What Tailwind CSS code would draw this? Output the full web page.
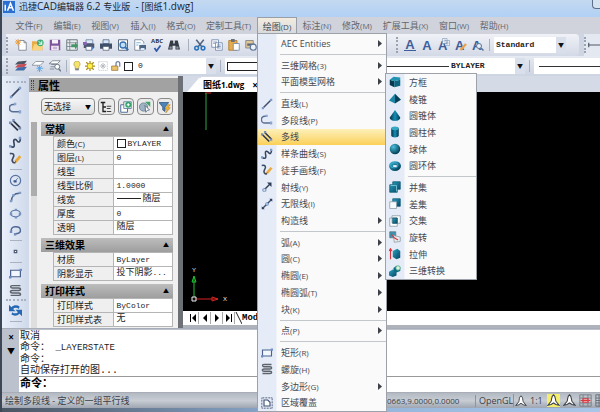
<!DOCTYPE html>
<html lang="zh-CN">
<head>
  <meta charset="utf-8">
  <title>迅捷CAD编辑器 6.2 专业版</title>
  <meta name="viewport" content="width=device-width, initial-scale=1">
  <script src="https://cdn.jsdelivr.net/npm/@tailwindcss/browser@4"></script>
</head>
<body class="bg-[#2d3238] font-['Open_Sans','Noto_Sans_CJK_SC',sans-serif] text-[9px] leading-none text-[#444952]">

  <!-- icon sprite -->
  <svg class="absolute size-0">
    <defs>
      <linearGradient id="teal" x1="0" y1="0" x2="1" y2="1"><stop offset="0" stop-color="#2ba3c4"/><stop offset="1" stop-color="#04445f"/></linearGradient>
      <linearGradient id="barrel" x1="0" y1="0" x2="1" y2="0"><stop offset="0" stop-color="#032f45"/><stop offset=".5" stop-color="#1590b5"/><stop offset="1" stop-color="#03354c"/></linearGradient>
      <radialGradient id="ballfill" cx=".35" cy=".3" r=".7"><stop offset="0" stop-color="#4cc0dc"/><stop offset="1" stop-color="#034058"/></radialGradient>
    </defs>
    <symbol id="line" viewBox="0 0 16 16"><path d="M3 13 13 3" stroke="#3b4a68" stroke-width="2"/><path d="M1 12h3v3H1zM12 1h3v3h-3z" fill="#7f9cc8"/></symbol>
    <symbol id="pline" viewBox="0 0 16 16" fill="none"><path d="M7 3H5a4 4 0 0 0 0 9h8" stroke="#5a6d92" stroke-width="2"/><path d="M6 1h3v3H6zM12 10h3v4h-3z" fill="#8ba6d0"/></symbol>
    <symbol id="mline" viewBox="0 0 16 16"><path d="m2 5 9 9M5 2l9 9" stroke="#30384a" stroke-width="2.200"/><path d="M0 3h3v3H0zM4 0h3v3H4zM12 10h3v3h-3z" fill="#7890b8"/></symbol>
    <symbol id="spline" viewBox="0 0 16 16" fill="none"><path d="M2 13c5 2 5-1 4-5s2-5 4-2 4 1 4-3" stroke="#34435f" stroke-width="2"/><path d="M0 11h3v3H0zM12 1h3v3h-3z" fill="#7f9cc8"/></symbol>
    <symbol id="free" viewBox="0 0 16 16" fill="none"><path d="M1 2c5-1 6 2 4 5s-1 7 3 6" stroke="#3d4a63" stroke-width="2"/><path d="m8 12 6-7" stroke="#eba93c" stroke-width="3.500"/><path d="m6 14 2-3 1 1z" fill="#704b1d"/></symbol>
    <symbol id="ray" viewBox="0 0 16 16"><path d="m4 12 8-8" stroke="#2f3d58" stroke-width="2"/><path d="M8 2h6v6z" fill="#2f3d58"/><path d="M2.500 10.500h4v3h-4z" fill="#fff" stroke="#4d72ae"/></symbol>
    <symbol id="xline" viewBox="0 0 16 16"><path d="M2 14 14 2" stroke="#3c5073" stroke-width="2"/><path d="M6.500 6.500h3v3h-3z" fill="#fff" stroke="#4d72ae"/><path d="M1 11v4h4zM11 1h4v4z" fill="#2f3d58"/></symbol>
    <symbol id="circle" viewBox="0 0 16 16" fill="none" stroke="#5673a3"><circle cx="8" cy="8" r="6.300" stroke-width="1.500"/><path d="m7 9 4-4"/><path d="M6 8h3v2H6z" fill="#2d466f"/></symbol>
    <symbol id="arc" viewBox="0 0 16 16" fill="none"><path d="M3 14c0-6 3-10 10-10" stroke="#4a6288" stroke-width="1.700"/><path d="M1 12h3v3H1zM4 5h3v3H4zM12 2h3v3h-3z" fill="#7f9cc8"/></symbol>
    <symbol id="ellipse" viewBox="0 0 16 16"><ellipse cx="8" cy="8" rx="6" ry="4" fill="none" stroke="#5673a3" stroke-width="1.500"/><path d="M1 7h3v3H1zM7 2h3v3H7zM12 7h3v3h-3zM7 11h3v3H7z" fill="#7893c0"/></symbol>
    <symbol id="earc" viewBox="0 0 16 16" fill="none"><path d="M3 9c-2-7 10-7 11-2 1 4-3 5-6 5" stroke="#4d6694" stroke-width="1.800"/><path d="M1 8h3v3H1zM6 11h3v3H6z" fill="#6f8cbd"/></symbol>
    <symbol id="point" viewBox="0 0 16 16"><path d="M6.500 6.500h3v3h-3z" fill="#fff" stroke="#4d5a72" stroke-width="1.500"/></symbol>
    <symbol id="rect" viewBox="0 0 16 16"><path d="M2 4h12v8H2z" fill="#f1f6ff" stroke="#48628e" stroke-width="1.500"/><path d="M0 11h3v3H0zM13 2h3v3h-3z" fill="#6d8dc4"/></symbol>
    <symbol id="helix" viewBox="0 0 16 16" fill="none" stroke="#5e646d" stroke-width="1.800"><path d="M14 2H4c-3 0-2 3 0 3h8c3 0 3 3 0 3H4c-3 0-3 3 0 3h8c3 0 3 3 0 3H2"/></symbol>
    <symbol id="wipe" viewBox="0 0 16 16"><path d="M1 1h14v14H1z" fill="none" stroke="#66738c" stroke-width="2" stroke-dasharray="1 1"/><path d="M4 4h5l3 3v5H4z" fill="#fff" stroke="#3d4f70" stroke-width="1.500"/></symbol>
    <symbol id="refresh" viewBox="0 0 16 16" fill="#2768b4"><path d="M0 1v8h8L5 6c2-2 5-2 7 0l1-3C10 1 6 1 3 4z"/><path d="M16 15V7H8l3 3c-2 2-5 2-7 0l-1 3c3 2 7 2 10-1z"/></symbol>

    <symbol id="box" viewBox="0 0 16 16"><path d="m1 5 6 2v8l-6-3z" fill="#06384f"/><path d="m7 7 8-2v8l-8 2z" fill="#0b6380"/><path d="m1 5 5-4 9 1v3L7 7z" fill="#2093b3"/></symbol>
    <symbol id="pyramid" viewBox="0 0 16 16"><path d="M8 1 0 10l8 4z" fill="#1c86a6"/><path d="m8 1 8 8-8 5z" fill="#064059"/></symbol>
    <symbol id="cone" viewBox="0 0 16 16"><path d="M8 0 1 10c0 6 14 6 14 0z" fill="url(#barrel)"/></symbol>
    <symbol id="cylinder" viewBox="0 0 16 16"><path d="M3 3v10c1 3 9 3 10 0V3z" fill="url(#barrel)"/><ellipse cx="8" cy="3" rx="5" ry="2.500" fill="#35a8c4"/></symbol>
    <symbol id="sphere" viewBox="0 0 16 16"><circle cx="8" cy="8" r="7" fill="url(#ballfill)"/></symbol>
    <symbol id="torus" viewBox="0 0 16 16"><ellipse cx="8" cy="8" rx="5.500" ry="4" fill="none" stroke="url(#teal)" stroke-width="5"/><ellipse cx="7" cy="7" rx="5" ry="3.500" fill="none" stroke="#49b5d0"/></symbol>
    <symbol id="union" viewBox="0 0 16 16"><path d="M5 1h10v10h-4v4H1V5h4z" fill="url(#teal)" stroke="#0b556f"/><path d="M2 6h8v8" fill="none" stroke="#8fd2e4"/></symbol>
    <symbol id="subtract" viewBox="0 0 16 16"><path d="M5 1h10v10H5z" fill="url(#teal)" stroke="#0b556f"/><path d="M1 5h9v9H1z" fill="#f7fafc" stroke="#8b9aa8"/></symbol>
    <symbol id="intersect" viewBox="0 0 16 16"><path d="M4 1h11v10H4zM1 4h10v11H1z" fill="#fff" stroke="#83929f"/><path d="M5 4h6v7H5z" fill="url(#teal)" stroke="#0b556f"/></symbol>
    <symbol id="rotate" viewBox="0 0 16 16"><path d="M1 1h8v8H1z" fill="#3b93ad" stroke="#557582"/><path d="m6 6 9 2v6l-8 1z" fill="#e8edf0" stroke="#8b98a2"/><path d="m3 4 4 5 5 3" fill="none" stroke="#d63b45" stroke-width="1.500"/></symbol>
    <symbol id="extrude" viewBox="0 0 16 16"><path d="m5 4 6-3 4 3v9l-5 2-5-3z" fill="url(#teal)"/><path d="M2 15V2M0 4l2-3 2 3" fill="none" stroke="#d9303a" stroke-width="1.500"/></symbol>
    <symbol id="convert" viewBox="0 0 16 16"><path d="m0 9 5-3 5 3v5l-5 2-5-2z" fill="url(#teal)"/><path d="m6 4 4-3 5 2v5l-5 2-4-2z" fill="#0d6a85"/><circle cx="12" cy="4" r="3" fill="#d9f2e2" stroke="#42a575"/></symbol>

    <symbol id="new" viewBox="0 0 16 16"><path d="M5 2h7l3 3v10H5z" fill="#fff" stroke="#6b7480"/><path d="M12 2v3h3" fill="none" stroke="#6b7480"/><path d="M4 0v9M0 4h8M1 1l6 6M7 1 1 7" stroke="#f09a36" stroke-width="1.300"/></symbol>
    <symbol id="open" viewBox="0 0 16 16"><path d="M0 3h6l1 2h7v10H0z" fill="#e9ad45"/><path d="m0 15 3-8h12l-2 8z" fill="#f8d480"/><circle cx="11" cy="5" r="4.500" fill="#3fae78"/><path d="m9 3 4 4m0-4v4H9" fill="none" stroke="#fff" stroke-width="1.300"/></symbol>
    <symbol id="save" viewBox="0 0 16 16"><path d="M1 1h14v14H1z" fill="#81539b"/><path d="M4 1h8v5H4zM3 9h10v6H3z" fill="#f6f1f9"/><path d="M5 11h6M5 13h6" stroke="#a386b5"/></symbol>
    <symbol id="export" viewBox="0 0 16 16"><path d="M1 1h14v14H1z" fill="#e8edef" stroke="#4e5962"/><path d="M1 5h14M5 1v14M1 10h14" stroke="#6d7a84"/><path d="M7 7h5V4l4 5-4 5v-3H7z" fill="#439668"/></symbol>
    <symbol id="plot" viewBox="0 0 16 16"><path d="M4 1h9v5H4z" fill="#dce9f8" stroke="#667995"/><path d="M1 6h14v6H1z" fill="#4b5870"/><path d="M4 10h8v5H4z" fill="#fff" stroke="#51627f"/><path d="M0 4h5v4H0z" fill="#8a62b3"/><path d="m11 10 4 2-4 3z" fill="#4d86ce"/></symbol>
    <symbol id="print" viewBox="0 0 16 16"><path d="M4 1h8v5H4z" fill="#d7e6f8" stroke="#52647e"/><path d="M0 6h16v7H0z" fill="#3f506a"/><path d="M4 10h8v5H4z" fill="#fff" stroke="#52647e"/></symbol>
    <symbol id="preview" viewBox="0 0 16 16"><path d="M2 1h12v14H2z" fill="#fff" stroke="#55677e" stroke-width="1.300"/><circle cx="8" cy="8" r="4" fill="#bfe0f7" stroke="#3870b0" stroke-width="1.700"/><path d="m11 11 4 4" stroke="#3870b0" stroke-width="2.500"/></symbol>
    <symbol id="zoomglass" viewBox="0 0 16 16"><circle cx="6" cy="6" r="5" fill="#e6f0fa" stroke="#59708f" stroke-width="2"/><path d="m10 10 5 5" stroke="#59708f" stroke-width="3"/></symbol>
    <symbol id="pagesetup" viewBox="0 0 16 16"><path d="M1 1h9l3 3v11H1z" fill="#fff" stroke="#64758a"/><path d="M3 5h6M3 8h3" stroke="#5f9ac9"/><path d="M7 8h9v6H7z" fill="#4f6683"/><path d="M9 6h5v2H9zM9 12h5v3H9z" fill="#d7e9fa"/></symbol>
    <symbol id="check" viewBox="0 0 16 16"><path d="m3 8 4 6 8-11" fill="none" stroke="#3159a8" stroke-width="3.500"/></symbol>
    <symbol id="find" viewBox="0 0 16 16" fill="#353b45"><path d="M3 2h4v4h2V2h4l3 12h-6V9H6v5H0z"/><path d="M2 10h3v3H2zM11 10h3v3h-3z" fill="#8b939e"/></symbol>
    <symbol id="cut" viewBox="0 0 16 16" fill="none"><path d="m3 1 8 10M13 1 5 11" stroke="#50647e" stroke-width="2"/><circle cx="3.500" cy="12" r="2.500" stroke="#2873bd" stroke-width="2"/><circle cx="12" cy="12" r="2.500" stroke="#2873bd" stroke-width="2"/></symbol>
    <symbol id="copy" viewBox="0 0 16 16" fill="#fff" stroke="#637da6"><path d="M1 1h9v10H1zM6 5h9v10H6z"/><path d="M3 4h5M3 6h2M8 8h5M8 10h5M8 12h5"/></symbol>
    <symbol id="paste" viewBox="0 0 16 16"><path d="M1 2h11v13H1z" fill="#e8ac48" stroke="#a5742a"/><path d="M4 0h5v4H4z" fill="#69717e"/><path d="M7 6h8v9H7z" fill="#fff" stroke="#6480ad"/></symbol>
    <symbol id="brush" viewBox="0 0 16 16"><path d="M1 2h10v10H1z" fill="#dfc79c" stroke="#777"/><path d="M3 6h10v3H3z" fill="#5c6776"/><circle cx="11" cy="11" r="4" fill="#eef3fa" stroke="#5b759d" stroke-width="1.500"/></symbol>
    <symbol id="layers" viewBox="0 0 16 16"><path d="m4 2 12-1-4 5H0z" fill="#4b5462"/><path d="m4 6 12-1-4 5H0z" fill="#c94d57"/><path d="m4 10 12-1-4 5H0z" fill="#3f6ca8"/></symbol>
    <symbol id="layernew" viewBox="0 0 16 16"><path d="M5 2h11l-5 5H0z" fill="#fff" stroke="#77808d"/><path d="M10 7v9M6 11h9M7 8l6 7M13 8l-6 7" stroke="#5ba7e5" stroke-width="1.300"/></symbol>
    <symbol id="layerfind" viewBox="0 0 16 16" fill="#fff" stroke="#6c7684"><path d="M5 1h10l-4 4H0zM3 6h8M2 9h6M1 12h6"/><circle cx="11" cy="9" r="3.300" stroke-width="1.300"/><path d="m13 12 3 3" stroke-width="2"/></symbol>
    <symbol id="bulb" viewBox="0 0 16 16"><path d="M8 0a5 5 0 0 1 3 9v3H5V9a5 5 0 0 1 3-9z" fill="#f7e36b" stroke="#a39444"/><path d="M5 12h6v3H5z" fill="#7d8389"/></symbol>
    <symbol id="sun" viewBox="0 0 16 16"><path d="M8 0v16M0 8h16M2 2l12 12M14 2 2 14" stroke="#b08f18" stroke-width="2"/><circle cx="8" cy="8" r="4.500" fill="#fff04a" stroke="#a18414"/></symbol>
    <symbol id="freeze" viewBox="0 0 16 16" fill="none" stroke="#b4b9bf"><path d="M1 1h14v14H1z" stroke-dasharray="2 1"/><path d="M8 3v10M3 8h10M5 5l6 6m0-6-6 6" stroke-width="1.500"/></symbol>
    <symbol id="lock" viewBox="0 0 16 16"><path d="M8 8V4c0-4 6-4 6 0v5" fill="none" stroke="#7080a8" stroke-width="2"/><path d="M1 8h10v7H1z" fill="#ebc56b" stroke="#866529"/></symbol>
    <symbol id="tree" viewBox="0 0 16 16"><path d="M1 2h6M4 2v13M4 8h4M4 14h4" fill="none" stroke="#222" stroke-width="1.800"/><path d="M9 7h6M9 10h5M9 14h6" stroke="#444" stroke-width="1.500"/></symbol>
    <symbol id="addset" viewBox="0 0 16 16"><path d="M1 5h9v10H1z" fill="#fff" stroke="#4d6c96" stroke-width="1.300"/><path d="M5 1h10v9H5z" fill="#e9f7ee" stroke="#4d6c96"/><circle cx="11" cy="5" r="4" fill="#34a36a"/><path d="M11 3v4M9 5h4" stroke="#fff" stroke-width="1.500"/></symbol>
    <symbol id="pick" viewBox="0 0 16 16"><circle cx="6" cy="8" r="5.500" fill="#9eb2c4" stroke="#667c92"/><path d="M8 1h7v7z" fill="#3fa269"/><path d="m8 6 6 6-3 .5L9 15z" fill="#fff" stroke="#455a70"/></symbol>
    <symbol id="filter" viewBox="0 0 16 16"><path d="M0 2h13L8 8v6l-3-2V8z" fill="#4d82b6" stroke="#2f5680"/><path d="m12 5-4 6h3l-2 5 6-7h-3l3-4z" fill="#f5b632" stroke="#b27712" stroke-width=".7"/></symbol>
    <symbol id="scale" viewBox="0 0 16 16" fill="#fff" stroke="#3d4148" stroke-width="1.300"><path d="M8 1c3 2 2 6 3 8l4 5-4-1-3-2-3 2-4 1 4-5c1-2 0-6 3-8z"/></symbol>
    <symbol id="snap" viewBox="0 0 16 16"><path d="M1 1h14v14H1zM1 5h14M1 11h14M5 1v14M11 1v14" fill="none" stroke="#70767f"/><path d="M2 8h12M5 6h6v4H5z" fill="#fff" stroke="#e0383e" stroke-width="1.500"/></symbol>
    <symbol id="gridmode" viewBox="0 0 16 16"><path d="M1 1h14v14H1zM1 5h14M1 8h14M1 11h14M5 1v14M8 1v14M11 1v14" fill="none" stroke="#5d636d"/></symbol>
  </svg>

  <div class="flex h-screen flex-col overflow-hidden border-l-2 border-[#3c4654] bg-[#c9d0dc]">

    <!-- title bar -->
    <header class="flex h-[17px] shrink-0 items-start justify-between bg-linear-to-b from-[#c4d9f0] to-[#b0d0f5] pl-px text-[#1b2430]">
      <div class="flex items-center gap-1">
        <svg class="size-3" viewBox="0 0 16 16"><path d="M0 0h16v16H0z" fill="#2b6fd0"/><path d="M3 5v8M6 13l4-10 4 10M8 9h4" fill="none" stroke="#fff" stroke-width="2"/></svg>
        <h1 class="whitespace-pre text-[9px] leading-3">迅捷<span class="text-[10px]">CAD</span>编辑器<span class="text-[10px]"> 6.2 </span>专业版<span class="text-[10px]">  - [</span>图纸<span class="text-[10px]">1.dwg]</span></h1>
      </div>
      <button class="h-[9px] w-2 rounded-bl border-b border-l border-[#5c6f88] bg-[#d5e2f0]" aria-label="最小化"></button>
    </header>

    <!-- menu bar -->
    <nav class="flex h-[17px] shrink-0 bg-[#d0d3dc] pl-2 text-[#62666f]" id="menubar"></nav>

    <!-- standard toolbar -->
    <div class="flex h-[22px] shrink-0 bg-[#cfd5e2] pl-1">
      <div class="flex min-w-0 flex-1 items-center rounded-r bg-linear-to-b from-[#f0f2f7] to-[#d3d9e6]">
        <div class="flex w-[386px] shrink-0 items-center gap-[5px]">
          <i class="mr-px h-4 w-[3px] border-l-2 border-dotted border-[#9ba3b3]"></i>
          <svg class="size-3"><use href="#new"/></svg>
          <svg class="size-3"><use href="#open"/></svg>
          <svg class="size-3"><use href="#save"/></svg>
          <svg class="size-3"><use href="#export"/></svg>
          <svg class="size-3"><use href="#plot"/></svg>
          <svg class="size-3"><use href="#print"/></svg>
          <svg class="size-3"><use href="#preview"/></svg>
          <svg class="size-3"><use href="#pagesetup"/></svg>
          <span class="flex w-3 flex-col items-center text-[6px] font-bold leading-[5px] text-[#30343c]">ABC<svg class="size-2 shrink-0"><use href="#check"/></svg></span>
          <svg class="size-3"><use href="#find"/></svg>
          <i class="ml-[3px] h-3 w-px bg-[#a9b0be]"></i>
          <svg class="size-3"><use href="#cut"/></svg>
          <svg class="size-3"><use href="#copy"/></svg>
          <svg class="size-3"><use href="#paste"/></svg>
          <svg class="size-3"><use href="#brush"/></svg>
        </div>
        <div class="flex items-center gap-[5px] font-['Liberation_Sans',sans-serif] text-[13px] font-bold text-[#3c5e9b]">
          <i class="ml-1 h-4 w-[3px] border-l-2 border-dotted border-[#9ba3b3]"></i>
          <span class="w-3 border-b border-[#3c5e9b] text-center leading-[11px]">A</span>
          <span class="w-3 text-center">A</span>
          <span class="relative w-3">A<svg class="absolute -top-px left-1 size-2"><use href="#copy"/></svg></span>
          <span class="relative w-3">A<svg class="absolute top-1 left-1 size-2" viewBox="0 0 16 16"><path d="m3 14 11-12" stroke="#eba04a" stroke-width="5"/></svg></span>
          <span class="relative w-3">A<svg class="absolute top-1 left-1 size-2"><use href="#zoomglass"/></svg></span>
          <i class="h-3 w-px bg-[#a9b0be]"></i>
        </div>
        <label class="relative ml-1 flex h-4 w-[72px] items-center bg-white">
          <select aria-label="文字样式" class="w-full appearance-none pl-[2px] font-['Liberation_Mono',monospace] text-[8px] font-bold text-[#222]"><option>Standard</option></select>
          <span class="pointer-events-none absolute right-0 flex h-4 w-[10px] items-center justify-center bg-[#d9e0ec] text-[6px] text-[#111]">▼</span>
        </label>
      </div>
      <div class="ml-[5px] flex w-4 shrink-0 items-center overflow-hidden bg-[#e4e8f0]">
        <i class="h-4 w-[6px] border-l-2 border-dotted border-[#9ba3b3]"></i>
        <svg class="size-3 shrink-0" viewBox="0 0 16 16"><path d="M0 8h16M1 5v6" stroke="#4e5968" stroke-width="1.500"/></svg>
      </div>
    </div>

    <!-- layer toolbar -->
    <div class="flex h-5 shrink-0 items-center bg-linear-to-b from-[#e6eaf2] to-[#cdd4e2] pl-1">
      <div class="flex w-[64px] shrink-0 items-center gap-[5px]">
        <i class="mr-px h-4 w-[3px] border-l-2 border-dotted border-[#9ba3b3]"></i>
        <svg class="size-3 shrink-0"><use href="#layers"/></svg>
        <svg class="size-3 shrink-0"><use href="#layernew"/></svg>
        <svg class="size-3 shrink-0"><use href="#layerfind"/></svg>
        <i class="h-3 w-px bg-[#a9b0be]"></i>
      </div>
      <label class="relative flex h-4 w-[146px] shrink-0 items-center gap-[3px] bg-white pl-[2px]">
        <svg class="size-[10px] shrink-0"><use href="#bulb"/></svg>
        <svg class="size-[10px] shrink-0"><use href="#sun"/></svg>
        <svg class="size-[10px] shrink-0"><use href="#freeze"/></svg>
        <svg class="size-[10px] shrink-0"><use href="#lock"/></svg>
        <i class="size-[9px] shrink-0 border border-[#222] bg-white"></i>
        <select aria-label="图层" class="min-w-0 flex-1 appearance-none pl-[2px] font-['Liberation_Mono',monospace] text-[8px] text-[#222]"><option>0</option></select>
        <span class="pointer-events-none absolute right-0 flex h-4 w-[10px] items-center justify-center bg-[#d9e0ec] text-[6px] text-[#111]">▼</span>
      </label>
      <i class="mx-1 h-3 w-px shrink-0 bg-[#a9b0be]"></i>
      <label class="flex h-4 w-[152px] shrink-0 items-center bg-white pl-[2px]">
        <i class="h-[9px] w-[60px] border border-[#222]"></i>
        <select aria-label="颜色" class="w-20 appearance-none"></select>
      </label>
      <label class="relative ml-[4px] flex h-4 w-[144px] shrink-0 items-center bg-white">
        <i class="h-px w-[68px] bg-[#333]"></i>
        <select aria-label="线型" class="w-[60px] appearance-none pl-[2px] font-['Liberation_Mono',monospace] text-[8px] font-bold text-[#222]"><option>BYLAYER</option></select>
        <span class="pointer-events-none absolute right-0 flex h-4 w-[10px] items-center justify-center bg-[#d9e0ec] text-[6px] text-[#111]">▼</span>
      </label>
      <i class="mx-1 h-3 w-px shrink-0 bg-[#a9b0be]"></i>
      <div class="flex h-4 flex-1 items-center bg-white pl-[5px]"><i class="h-px flex-1 bg-[#333]"></i></div>
    </div>

    <!-- work area -->
    <main class="flex min-h-0 flex-1">
      <aside class="flex w-[27px] shrink-0 flex-col items-center bg-linear-to-r from-[#eaf0fa] to-[#cfd9ea] pt-1 pb-1" id="drawbar"></aside>

      <section class="flex w-[154px] shrink-0 flex-col border-r-[5px] border-[#6d7075] bg-[#f0f0f0] text-[#222]">
        <h2 class="mt-[2px] flex h-[14px] shrink-0 items-center gap-1 bg-[#a2a2a2] pl-[2px] text-[11px] font-bold text-black"><i class="h-[10px] w-[3px] border-x border-dotted border-[#444]"></i>属性</h2>
        <div class="flex shrink-0 items-center gap-[3px] pt-[6px] pr-[5px] pb-[7px] pl-3">
          <label class="relative flex h-[17px] w-[54px] items-center rounded-sm border border-[#8a8a8a] bg-linear-to-b from-[#f6f6f6] to-[#dcdcdc]">
            <select aria-label="选择" class="w-full appearance-none pl-[2px] text-[9px]"><option>无选择</option></select>
            <span class="pointer-events-none absolute right-[3px] text-[6px] text-black">▼</span>
          </label>
          <button class="flex h-[17px] flex-1 items-center justify-center rounded-sm border border-[#8a8a8a] bg-[#eaeaea]" aria-label="树"><svg class="size-3"><use href="#tree"/></svg></button>
          <button class="flex h-[17px] flex-1 items-center justify-center rounded-sm border border-[#8a8a8a] bg-[#eaeaea]" aria-label="添加"><svg class="size-3"><use href="#addset"/></svg></button>
          <button class="flex h-[17px] flex-1 items-center justify-center rounded-sm border border-[#8a8a8a] bg-[#eaeaea]" aria-label="拾取"><svg class="size-3"><use href="#pick"/></svg></button>
          <button class="flex h-[17px] flex-1 items-center justify-center rounded-sm border border-[#8a8a8a] bg-[#eaeaea]" aria-label="筛选"><svg class="size-3"><use href="#filter"/></svg></button>
        </div>
        <div class="flex min-h-0 flex-1 gap-1 overflow-hidden pr-[5px] pl-[2px]">
          <div class="w-[6px] shrink-0 bg-[#dedede]"><div class="h-[74px] bg-[#adadad]"></div></div>
          <div class="flex flex-1 flex-col gap-[3px]" id="props"></div>
        </div>
      </section>

      <section class="flex min-w-0 flex-1 flex-col bg-[#d5dbe6]">
        <div class="flex h-4 shrink-0 items-end pl-1">
          <svg class="h-[15px] w-[14px]" viewBox="0 0 14 15"><path d="M0 15 12 1h2v14z" fill="#fff"/></svg>
          <div class="flex h-[15px] items-center gap-2 bg-white pr-2 pl-[2px] text-[9px] font-bold text-black"><span>图纸<span class="text-[8px]">1.dwg</span></span><button aria-label="关闭" class="text-[10px] font-bold">×</button></div>
        </div>
        <div class="relative flex-1 bg-black">
          <svg class="absolute top-0 left-[22px] h-[38px] w-2" viewBox="0 0 8 38"><path d="M0 1h6" stroke="#c22"/><path d="M1 1v37" stroke="#35a53e" stroke-width="1"/></svg>
          <svg class="absolute bottom-1 left-[6px] h-[42px] w-10 font-['Liberation_Sans',sans-serif]" viewBox="0 0 40 42"><path d="M5 33V12" stroke="#1fc32f"/><path d="m3 17 2-6 2 6z" fill="none" stroke="#1fc32f"/><path d="M7 34h22" stroke="#d52222"/><path d="m23 32 6 2-6 2z" fill="none" stroke="#d52222"/><path d="M3 32h4v4H3z" fill="#111" stroke="#eee"/><text x="3" y="7" font-size="6" fill="#eee">Y</text><text x="34" y="36" font-size="6" fill="#eee">X</text></svg>
        </div>
        <div class="flex h-[14px] shrink-0 items-center bg-white pl-1 text-black">
          <button class="flex h-3 w-3 items-center justify-center border-r border-[#aaa]" aria-label="第一页"><svg class="size-2" viewBox="0 0 8 8"><path d="M1 0h1v8H1zM7 0v8L3 4z"/></svg></button>
          <button class="flex h-3 w-3 items-center justify-center border-r border-[#aaa]" aria-label="上一页"><svg class="size-2" viewBox="0 0 8 8"><path d="M6 0v8L2 4z"/></svg></button>
          <button class="flex h-3 w-3 items-center justify-center border-r border-[#aaa]" aria-label="下一页"><svg class="size-2" viewBox="0 0 8 8"><path d="M2 0v8l4-4z"/></svg></button>
          <button class="flex h-3 w-3 items-center justify-center border-r border-[#aaa]" aria-label="最后一页"><svg class="size-2" viewBox="0 0 8 8"><path d="M6 0h1v8H6zM1 0v8l4-4z"/></svg></button>
          <svg class="h-3 w-[7px]" viewBox="0 0 7 12"><path d="m1 0 6 12" stroke="#222"/></svg>
          <a href="#model" class="font-['Liberation_Mono',monospace] text-[9px] font-bold">Mod</a>
        </div>
        <div class="h-[3px] shrink-0 bg-[#aeb3bb]"></div>
      </section>
    </main>

    <!-- command line -->
    <section class="flex shrink-0 border-y border-[#a8adb7] bg-[#bcc2cd] pt-px pl-px text-[#222]">
      <div class="flex w-4 shrink-0 flex-col items-center gap-[5px] pt-[2px] text-black">
        <button aria-label="关闭" class="text-[10px] font-bold">×</button>
        <span class="text-[8px]">▼</span>
      </div>
      <div class="flex-1 bg-white font-['Liberation_Mono','Noto_Sans_CJK_SC',monospace]">
        <div class="border-b border-[#999] pt-px pl-px text-[10px] leading-[11px]">
          <p>取消</p>
          <p class="whitespace-pre">命令：<span class="text-[9px]"> _LAYERSTATE</span></p>
          <p>命令：</p>
          <p>自动保存打开的图...</p>
        </div>
        <label class="flex h-[15px] items-center pl-px text-[11px] font-bold text-black">命令：<input class="h-3 flex-1 outline-none" type="text"></label>
      </div>
    </section>

    <!-- status bar -->
    <footer class="flex h-[15px] shrink-0 items-center bg-linear-to-b from-[#b3b9c2] via-[#c8cdd4] to-[#9fa6b1] pl-[3px] text-[#3a3f47]">
      <span class="w-[382px] shrink-0">绘制多段线 - 定义的一组平行线</span>
      <span class="w-[88px] shrink-0 text-[8px]">0663,9.0000,0.0000</span>
      <span class="flex h-3 w-[38px] shrink-0 items-center border-l border-[#8d949f] pl-[3px] text-[9px]">OpenGL</span>
      <span class="flex flex-1 items-center gap-[3px] border-l border-[#8d949f] pl-px">
        <svg class="size-3 shrink-0"><use href="#scale"/></svg>
        <span class="w-[14px] shrink-0">1:1</span>
        <svg class="size-[13px] shrink-0 bg-[#f3ee6c]"><use href="#scale"/></svg>
        <svg class="size-[13px] shrink-0"><use href="#scale"/></svg>
        <svg class="size-[13px] shrink-0"><use href="#snap"/></svg>
        <svg class="size-[13px] shrink-0"><use href="#gridmode"/></svg>
      </span>
    </footer>
    <div class="h-[4px] shrink-0 bg-linear-to-r from-[#4a5563] via-[#8fb0d6] to-[#a9c6e8]"></div>
  </div>

  <script>
    // '-' is a separator, '>' marks an entry that opens a submenu
    var drawMenu = [
      ['', 'AEC Entities', '>'], '-',
      ['', '三维网格(3)', '>'], ['', '平面模型网格', '>'], '-',
      ['line', '直线(L)'], ['pline', '多段线(P)'], ['mline', '多线', 'on'], ['spline', '样条曲线(S)'],
      ['free', '徒手画线(F)'], ['ray', '射线(Y)'], ['xline', '无限线(I)'], ['', '构造线', '>'], '-',
      ['', '弧(A)', '>'], ['', '圆(C)', '>'], ['', '椭圆(E)', '>'], ['', '椭圆弧(T)', '>'], ['', '块(K)', '>'], '-',
      ['', '点(P)', '>'], '-',
      ['rect', '矩形(R)'], ['helix', '螺旋(H)'], ['', '多边形(G)', '>'], ['wipe', '区域覆盖']
    ];
    var solidMenu = [
      ['box', '方框'], ['pyramid', '棱锥'], ['cone', '圆锥体'], ['cylinder', '圆柱体'], ['sphere', '球体'], ['torus', '圆环体'], '-',
      ['union', '并集'], ['subtract', '差集'], ['intersect', '交集'], ['rotate', '旋转'], ['extrude', '拉伸'], ['convert', '三维转换']
    ];

    function label(text) {
      return '<span>' + text.replace(/(\(.\))/, '<span class="text-[8px]">$1</span>') + '</span>';
    }

    function menu(items) {
      return items.map(function(it) {
        if (it === '-') return '<hr class="my-[2px] ml-[22px] border-[#c3c6cb]">';
        var cls = it[2] === 'on'
          ? 'flex min-h-0 w-full flex-1 items-center bg-linear-to-b from-[#fdf0b8] to-[#fbd055] pl-[3px] text-left'
          : 'flex min-h-0 w-full flex-1 items-center pl-[3px] text-left';
        return '<button class="' + cls + '">' +
          '<svg class="mr-2 size-3 shrink-0">' + (it[0] ? '<use href="#' + it[0] + '"/>' : '') + '</svg>' +
          label(it[1]) +
          (it[2] === '>' ? '<svg class="mr-1 ml-auto h-[7px] w-1" viewBox="0 0 4 7"><path d="M0 0v7l4-3.500z" fill="#3d4046"/></svg>' : '') +
          '</button>';
      }).join('');
    }

    var bar = [
      ['文件(F)', 'w-[38px]'], ['编辑(E)', 'w-[38px]'], ['视图(V)', 'w-[38px]'], ['插入(I)', 'w-[38px]'], ['格式(O)', 'w-[38px]'],
      ['定制工具(T)', 'w-[57px]'], ['绘图(D)', 'w-[40px]'], ['标注(N)', 'w-[40px]'], ['修改(M)', 'w-[40px]'],
      ['扩展工具(X)', 'w-[57px]'], ['窗口(W)', 'w-[40px]'], ['帮助(H)', 'w-[40px]']
    ];
    document.getElementById('menubar').innerHTML = bar.map(function(b) {
      if (b[0] !== '绘图(D)') return '<button class="shrink-0 ' + b[1] + '">' + label(b[0]) + '</button>';
      return '<div class="relative z-10 shrink-0 text-[#444952] ' + b[1] + '">' +
        '<button class="h-full w-full border border-b-0 border-[#9a9ea8] bg-linear-to-b from-[#f3ecdf] to-[#d8d9dd]">' + label(b[0]) + '</button>' +
        '<div class="absolute top-4 left-0 flex h-[379px] w-[130px] flex-col border border-[#9da1a9] bg-linear-to-r from-[#e6ecf7] from-[18px] to-[#fafafa] to-[19px] pt-px">' + menu(drawMenu) + '</div>' +
        '<div class="absolute top-[56px] left-[128px] flex h-[207px] w-[92px] flex-col border border-[#9da1a9] bg-linear-to-r from-[#e6ecf7] from-[18px] to-[#fafafa] to-[19px]">' + menu(solidMenu) + '</div>' +
        '</div>';
    }).join('');

    var tools = ['.', 'line', 'pline', 'mline', 'spline', 'free', '-', 'circle', 'arc', 'ellipse', 'earc', '-', 'point', '-', 'rect', 'helix', '.', 'refresh', '-'];
    document.getElementById('drawbar').innerHTML = tools.map(function(t) {
      if (t === '.') return '<i class="my-px w-5 border-t-2 border-dotted border-[#a9b2c2]"></i>';
      if (t === '-') return '<i class="my-[2px] h-px w-3 bg-[#a9b2c2]"></i>';
      return '<button class="flex min-h-0 flex-1 items-center" aria-label="' + t + '"><svg class="size-[13px]"><use href="#' + t + '"/></svg></button>';
    }).join('');

    var props = [
      ['常规', [['颜色(C)', '<i class="mr-[2px] inline-block size-[9px] border border-[#222] align-middle"></i>BYLAYER'], ['图层(L)', '0'], ['线型', ''], ['线型比例', '1.0000'],
        ['线宽', '<i class="mr-[2px] inline-block h-px w-6 bg-[#222] align-middle"></i><span class="text-[9px]">随层</span>'], ['厚度', '0'], ['透明', '<span class="text-[9px]">随层</span>']]],
      ['三维效果', [['材质', 'ByLayer'], ['阴影显示', '<span class="text-[9px]">投下阴影</span>...']]],
      ['打印样式', [['打印样式', 'ByColor'], ['打印样式表', '<span class="text-[9px]">无</span>']]]
    ];
    document.getElementById('props').innerHTML = props.map(function(g) {
      return '<div><h3 class="flex h-[14px] items-center justify-between bg-linear-to-b from-[#bdbdbd] to-[#9e9e9e] px-1 text-[10px] font-bold text-black">' + g[0] + '<span class="text-[6px]">▲</span></h3>' +
        '<table class="ml-3 w-[120px] table-fixed border-collapse">' + g[1].map(function(r) {
          return '<tr class="h-[14px]"><th class="border border-[#b5b5b5] bg-[#efefef] pl-[3px] text-left font-normal whitespace-nowrap">' + label(r[0]) + '</th>' +
            '<td class="border border-[#b5b5b5] bg-white pl-[3px] font-[\'Liberation_Mono\',\'Noto_Sans_CJK_SC\',monospace] text-[8px] whitespace-nowrap">' + r[1] + '</td></tr>';
        }).join('') + '</table></div>';
    }).join('');
  </script>
</body>
</html>
